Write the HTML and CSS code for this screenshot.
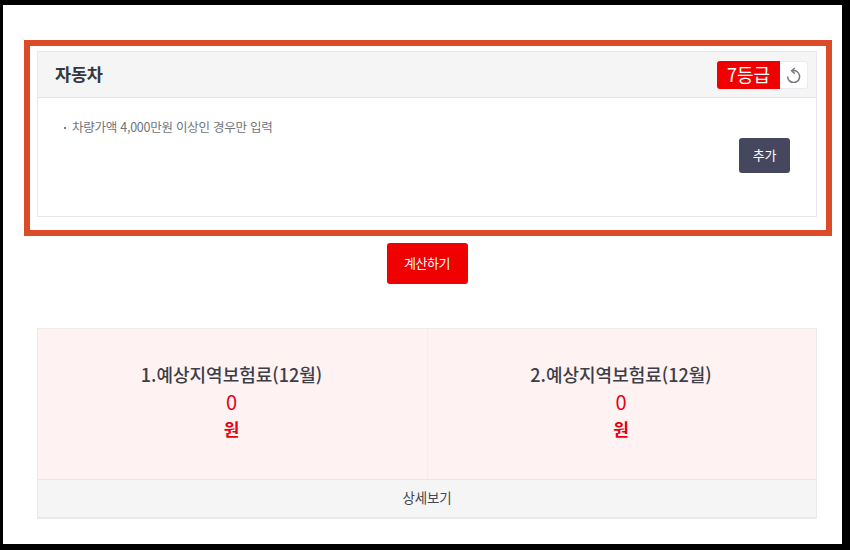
FILE: index.html
```html
<!DOCTYPE html>
<html lang="ko">
<head>
<meta charset="utf-8">
<title>자동차</title>
<link rel="stylesheet" href="styles.css">
</head>
<body>
<main class="frame">
  <section class="highlight">
    <div class="card">
      <header class="card-head">
        <h2 class="card-title">자동차</h2>
        <div class="grade-group">
          <span class="grade">7등급</span>
          <button class="reset" type="button" aria-label="초기화">
            <svg width="16" height="16" viewBox="0 0 16 16" fill="none" stroke="#73767e" stroke-width="1.5">
              <path d="M6.6 3.6A6 6 0 1 1 1.6 9.5"/>
              <path d="M8.8 .9 5.6 3.8 8.8 6.6" stroke-width="1.4"/>
            </svg>
          </button>
        </div>
      </header>
      <div class="card-body">
        <ul class="notes"><li>차량가액 4,000만원 이상인 경우만 입력</li></ul>
        <button class="add" type="button">추가</button>
      </div>
    </div>
  </section>
  <div class="actions"><button class="calc" type="button">계산하기</button></div>
  <section class="result">
    <div class="result-cells">
      <div class="cell">
        <h3 class="cell-title">1.예상지역보험료(12월)</h3>
        <p class="amount">0</p>
        <p class="unit">원</p>
      </div>
      <div class="cell">
        <h3 class="cell-title">2.예상지역보험료(12월)</h3>
        <p class="amount">0</p>
        <p class="unit">원</p>
      </div>
    </div>
    <div class="detail">상세보기</div>
  </section>
</main>
</body>
</html>
```

FILE: styles.css
```css
* { box-sizing: border-box; }
html, body { margin: 0; height: 100%; }
body {
  background: #000;
  padding: 5px 8px 6px 3px;
  font-family: "Noto Sans CJK KR", "Noto Sans", sans-serif;
  overflow: hidden;
}
.frame {
  background: #fff;
  height: 539px;
  padding: 35px 10px 0 21px;
}
.highlight {
  border: 6px solid #dc4b28;
  padding: 5px 9px 13px 7px;
  height: 196px;
}
.card {
  border: 1px solid #e8e8ea;
  height: 100%;
  display: flex;
  flex-direction: column;
}
.card-head {
  height: 46px;
  flex: none;
  background: #f5f5f5;
  border-bottom: 1px solid #e3e3e6;
  display: flex;
  align-items: center;
  justify-content: space-between;
  padding: 0 8px 0 17px;
}
.card-title {
  margin: 0 0 2px;
  font-size: 17.5px;
  font-weight: 700;
  letter-spacing: -0.2px;
  color: #35373f;
}
.grade-group { display: flex; height: 28px; }
.grade {
  width: 63px;
  background: #f00000;
  color: #fff;
  font-size: 18px;
  line-height: 27px;
  text-align: center;
  border-radius: 3px 0 0 3px;
}
.reset {
  width: 28px;
  padding: 0;
  background: #fff;
  border: 1px solid #ececee;
  border-left: 0;
  border-radius: 0 3px 3px 0;
  display: flex;
  align-items: center;
  justify-content: center;
}
.card-body {
  flex: 1;
  display: flex;
  justify-content: space-between;
  align-items: flex-start;
  padding: 19px 26px 0 25px;
}
.notes {
  margin: 0;
  padding: 0;
  list-style: none;
  font-size: 12.5px;
  letter-spacing: -0.25px;
  line-height: 20px;
  color: #70747c;
}
.notes li::before {
  content: "";
  display: inline-block;
  width: 2px;
  height: 2px;
  background: #555;
  border-radius: 50%;
  margin: 0 6px 3px 1px;
}
.add {
  margin-top: 21px;
  width: 51px;
  height: 35px;
  border: 0;
  border-radius: 3px;
  background: #45475e;
  color: #fff;
  font: inherit;
  font-size: 13px;
  letter-spacing: -0.3px;
  padding: 0 0 3px;
}
.actions {
  display: flex;
  justify-content: center;
  padding: 7px 2px 0 0;
}
.calc {
  width: 81px;
  height: 41px;
  border: 0;
  border-radius: 3px;
  background: #f00000;
  color: #fff;
  font: inherit;
  font-size: 13px;
  letter-spacing: -0.4px;
  padding: 0 0 3px;
}
.result {
  margin: 44px 15px 0 13px;
  border: 1px solid #eeeaec;
  height: 191px;
  display: flex;
  flex-direction: column;
}
.result-cells {
  height: 150px;
  flex: none;
  display: grid;
  grid-template-columns: 1fr 1fr;
  background: #fff2f2;
}
.cell {
  text-align: center;
  padding: 32px 2px 0 0;
}
.cell + .cell { border-left: 1px solid #f8ecec; }
.cell-title {
  margin: 0;
  font-size: 18px;
  font-weight: 500;
  line-height: 26px;
  color: #3c3e48;
}
.amount {
  margin: 1px 0 0;
  font-size: 20px;
  line-height: 27px;
  color: #e60012;
}
.unit {
  margin: 0;
  font-size: 17px;
  font-weight: 700;
  line-height: 27px;
  color: #e60012;
}
.detail {
  flex: 1;
  background: #f5f5f5;
  border-top: 1px solid #e8e8ea;
  border-bottom: 1px solid #e8e8ea;
  display: flex;
  align-items: center;
  justify-content: center;
  font-size: 13.5px;
  letter-spacing: -0.2px;
  padding-bottom: 3px;
  color: #45474f;
}
```
